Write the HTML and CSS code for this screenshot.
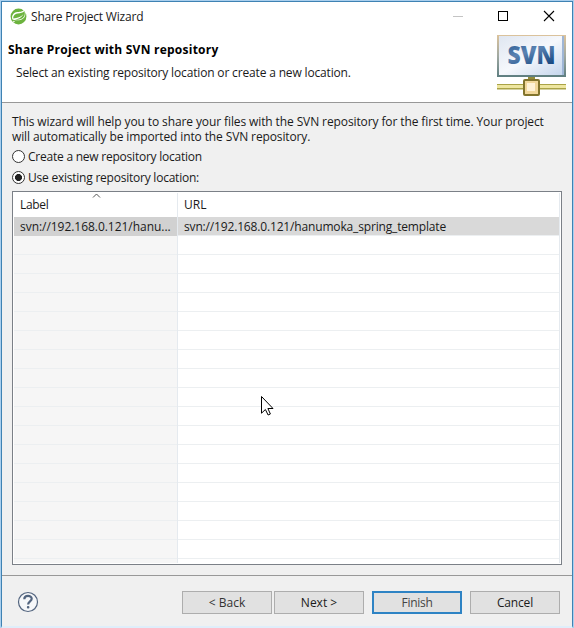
FILE: index.html
```
<!DOCTYPE html>
<html lang="en">
<head>
<meta charset="utf-8">
<title>Share Project Wizard</title>
<link rel="stylesheet" href="styles.css">
</head>
<body>
<main class="window">
  <header class="banner">
    <div class="titlebar">
      <svg class="spring" width="17" height="17" viewBox="0 0 17 17"><circle cx="8.5" cy="8.5" r="7.9" fill="#6cb33e"/><path d="M14.8 1C13.6 3.6 10.8 3.7 7.5 4.1C3.2 4.7 1.4 7.6 2.3 11.3C4.5 12.6 11.5 13.2 14.3 9.5C16 7 15.7 3.6 14.8 1Z" fill="#fff"/><path d="M14.4 2.9C12.9 4.9 10.6 5 7.6 5.4C4.2 5.9 2.9 8.2 3.4 10.6C7 10 11 9 13.5 6C11.8 9.6 8.6 10.9 5 11.7C8.5 12.2 12.1 11.5 13.7 9.1C15.2 7 15 4.8 14.4 2.9Z" fill="#6cb33e"/><circle cx="3.9" cy="13.5" r=".8" fill="#fff"/></svg>
      <span class="caption">Share Project Wizard</span>
      <svg class="controls" width="106" height="14" viewBox="0 0 106 14" fill="none"><path d="M2 7.5H12" stroke="#c4c4c4"/><rect x="47.5" y="2.5" width="9" height="9" stroke="#000"/><path d="M93 2L103 12M103 2L93 12" stroke="#000" stroke-width="1.1"/></svg>
    </div>
    <div class="heading">
      <div>
        <h1>Share Project with SVN repository</h1>
        <p class="subtitle">Select an existing repository location or create a new location.</p>
      </div>
      <svg class="logo" width="70" height="62" viewBox="0 0 70 62">
        <defs>
          <linearGradient id="screen" x2="1" y2="1"><stop stop-color="#dfe6f1"/><stop offset=".5" stop-color="#f6f8fc"/><stop offset="1" stop-color="#c4d5ec"/></linearGradient>
          <linearGradient id="frame" x2="0" y2="1"><stop stop-color="#dcc39c"/><stop offset=".5" stop-color="#a1a9a2"/><stop offset="1" stop-color="#5e7e80"/></linearGradient>
          <linearGradient id="ink" x2=".5" y2="1"><stop stop-color="#1e508c"/><stop offset=".5" stop-color="#5b83b2"/><stop offset="1" stop-color="#174780"/></linearGradient>
        </defs>
        <rect x="0" y="1" width="69" height="42" fill="url(#frame)"/>
        <rect x="2" y="2" width="65" height="39" fill="url(#screen)"/>
        <rect x="65" y="2" width="2" height="39" fill="#9fb6d6"/>
        <text x="10.5" y="30" class="logo-text" textLength="48" lengthAdjust="spacingAndGlyphs" fill="url(#ink)">SVN</text>
        <path d="M0 50H69V55.5H0Z" fill="#aaa347"/><path d="M0 51H69V54H0Z" fill="#eee6a0"/>
        <path d="M31 43H38V47H31Z" fill="#928c3c"/>
        <rect x="27" y="46" width="15" height="15" rx="1" fill="#faebbd" stroke="#82742c" stroke-width="2"/>
        <rect x="28" y="47" width="13" height="13" fill="#f1d79a"/><rect x="30" y="49" width="8" height="8" fill="#fff2d6"/>
      </svg>
    </div>
  </header>
  <section class="content">
    <p class="intro intro-one">This wizard will help you to share your files with the SVN repository for the first time. Your project</p>
    <p class="intro intro-two">will automatically be imported into the SVN repository.</p>
    <div class="option"><i class="radio"></i><span>Create a new repository location</span></div>
    <div class="option"><i class="radio checked"></i><span>Use existing repository location:</span></div>
    <div class="table">
      <div class="row head"><div class="cell"><span class="th-label">Label</span><svg class="sort" width="9" height="6" viewBox="0 0 9 6"><path d="M1 4.5L4.5 1L8 4.5" fill="none" stroke="#555"/></svg></div><div class="cell"><span>URL</span></div></div>
      <div class="row selected"><div class="cell"><span class="td-label">svn://192.168.0.121/hanu...</span></div><div class="cell"><span class="td-url">svn://192.168.0.121/hanumoka_spring_template</span></div></div>
      <div class="row empty"><div class="cell"></div><div class="cell"></div></div>
    </div>
  </section>
  <footer class="footer">
    <svg class="help" width="22" height="22" viewBox="0 0 22 22"><circle cx="11" cy="11" r="9.5" fill="#f6f7f9" stroke="#53657f" stroke-width="1.2"/><path d="M7.3 8.2C7.3 3.7 14.7 3.9 14.7 7.8C14.7 10.3 11.1 10.4 11.1 13.4" fill="none" stroke="#53657f" stroke-width="2.2"/><rect x="9.9" y="15" width="2.5" height="2.4" rx="1" fill="#53657f"/></svg>
    <div class="button back"><span>&lt; Back</span></div>
    <div class="button next"><span>Next &gt;</span></div>
    <div class="button finish"><span>Finish</span></div>
    <div class="button cancel"><span>Cancel</span></div>
  </footer>
  <svg class="cursor" width="13" height="20" viewBox="0 0 13 20"><path d="M.5 .5V17.2L4.4 13.5L7.1 19L9.4 18L6.9 12.5H12Z" fill="#fff" stroke="#000"/></svg>
</main>
</body>
</html>
```
FILE: styles.css
```
* { box-sizing: border-box; }
body {
  margin: 0;
  width: 574px;
  height: 628px;
  overflow: hidden;
  padding: 1px 1px 0;
  background: #a9cfee;
  color: #1a1a1a;
  font: 12px/15px "Open Sans", "Noto Sans", sans-serif;
}
h1, p { margin: 0; }
span { white-space: nowrap; }
.window {
  position: relative;
  height: 627px;
  border: 1px solid #3f82b3;
  border-bottom: 2px solid #dfeefa;
  background: #f0f0f0;
}
.banner { height: 101px; background: #fff; border-bottom: 1px solid #989898; }
.titlebar { display: flex; align-items: center; height: 28px; padding: 0 15px 0 8px; }
.caption { margin-left: 4px; letter-spacing: -0.2px; }
.controls { margin-left: auto; }
.heading { display: flex; justify-content: space-between; padding: 4px 5px 0 6px; }
h1 { margin-top: 7px; color: #000; font-size: 12px; line-height: 17px; font-weight: 700; letter-spacing: 0.24px; }
.subtitle { margin: 7px 0 0 8px; letter-spacing: -0.16px; }
.logo-text { font: 800 24px "Open Sans", sans-serif; }
.content { height: 473px; padding: 11px 10px 0; border-bottom: 1px solid #989898; }
.intro { height: 15px; white-space: nowrap; }
.intro-one { letter-spacing: -0.108px; }
.intro-two { letter-spacing: -0.12px; }
.option { display: flex; align-items: center; height: 21px; gap: 3px; letter-spacing: -0.23px; }
.intro + .option { margin-top: 2px; }
.radio { display: block; width: 13px; height: 13px; border: 1px solid #333; border-radius: 50%; background: #fff; }
.checked { background: radial-gradient(circle, #222 0 3.2px, #fff 3.8px); }
.table {
  display: flex;
  flex-direction: column;
  height: 374px;
  margin-top: 3px;
  padding: 1px;
  border: 1px solid #7b8087;
  background: #fff;
}
.row { display: grid; grid-template-columns: 164px 1fr; }
.cell { position: relative; padding-left: 6px; border-right: 1px solid #e5eaef; }
.head { height: 24px; line-height: 23px; }
.th-label { letter-spacing: -0.3px; }
.td-label { letter-spacing: -0.04px; }
.td-url { letter-spacing: -0.16px; }
.sort { position: absolute; left: 78px; top: 0; }
.selected { height: 19px; border-bottom: 1px solid #eceff1; background: #d9d9d9; line-height: 19px; }
.selected .cell:first-child { background: #d1d1d1; }
.empty { flex: 1; }
.empty .cell {
  background-image: repeating-linear-gradient(transparent 0 18px, #eceff1 18px 19px);
  background-repeat: no-repeat;
}
.empty .cell:first-child { background-color: #f6f6f6; }
.footer { display: flex; padding: 15px 12px 0 15px; }
.button {
  display: flex;
  align-items: center;
  justify-content: center;
  width: 90px;
  height: 23px;
  border: 1px solid #adadad;
  background: #e1e1e1;
}
.back { margin-left: auto; color: #333; }
.next { margin-left: 2px; }
.finish { margin-left: 8px; border: 2px solid #2e83c4; color: #444; letter-spacing: -0.3px; }
.cancel { margin-left: 8px; letter-spacing: -0.15px; }
.cursor { position: absolute; left: 259px; top: 394px; }
```
